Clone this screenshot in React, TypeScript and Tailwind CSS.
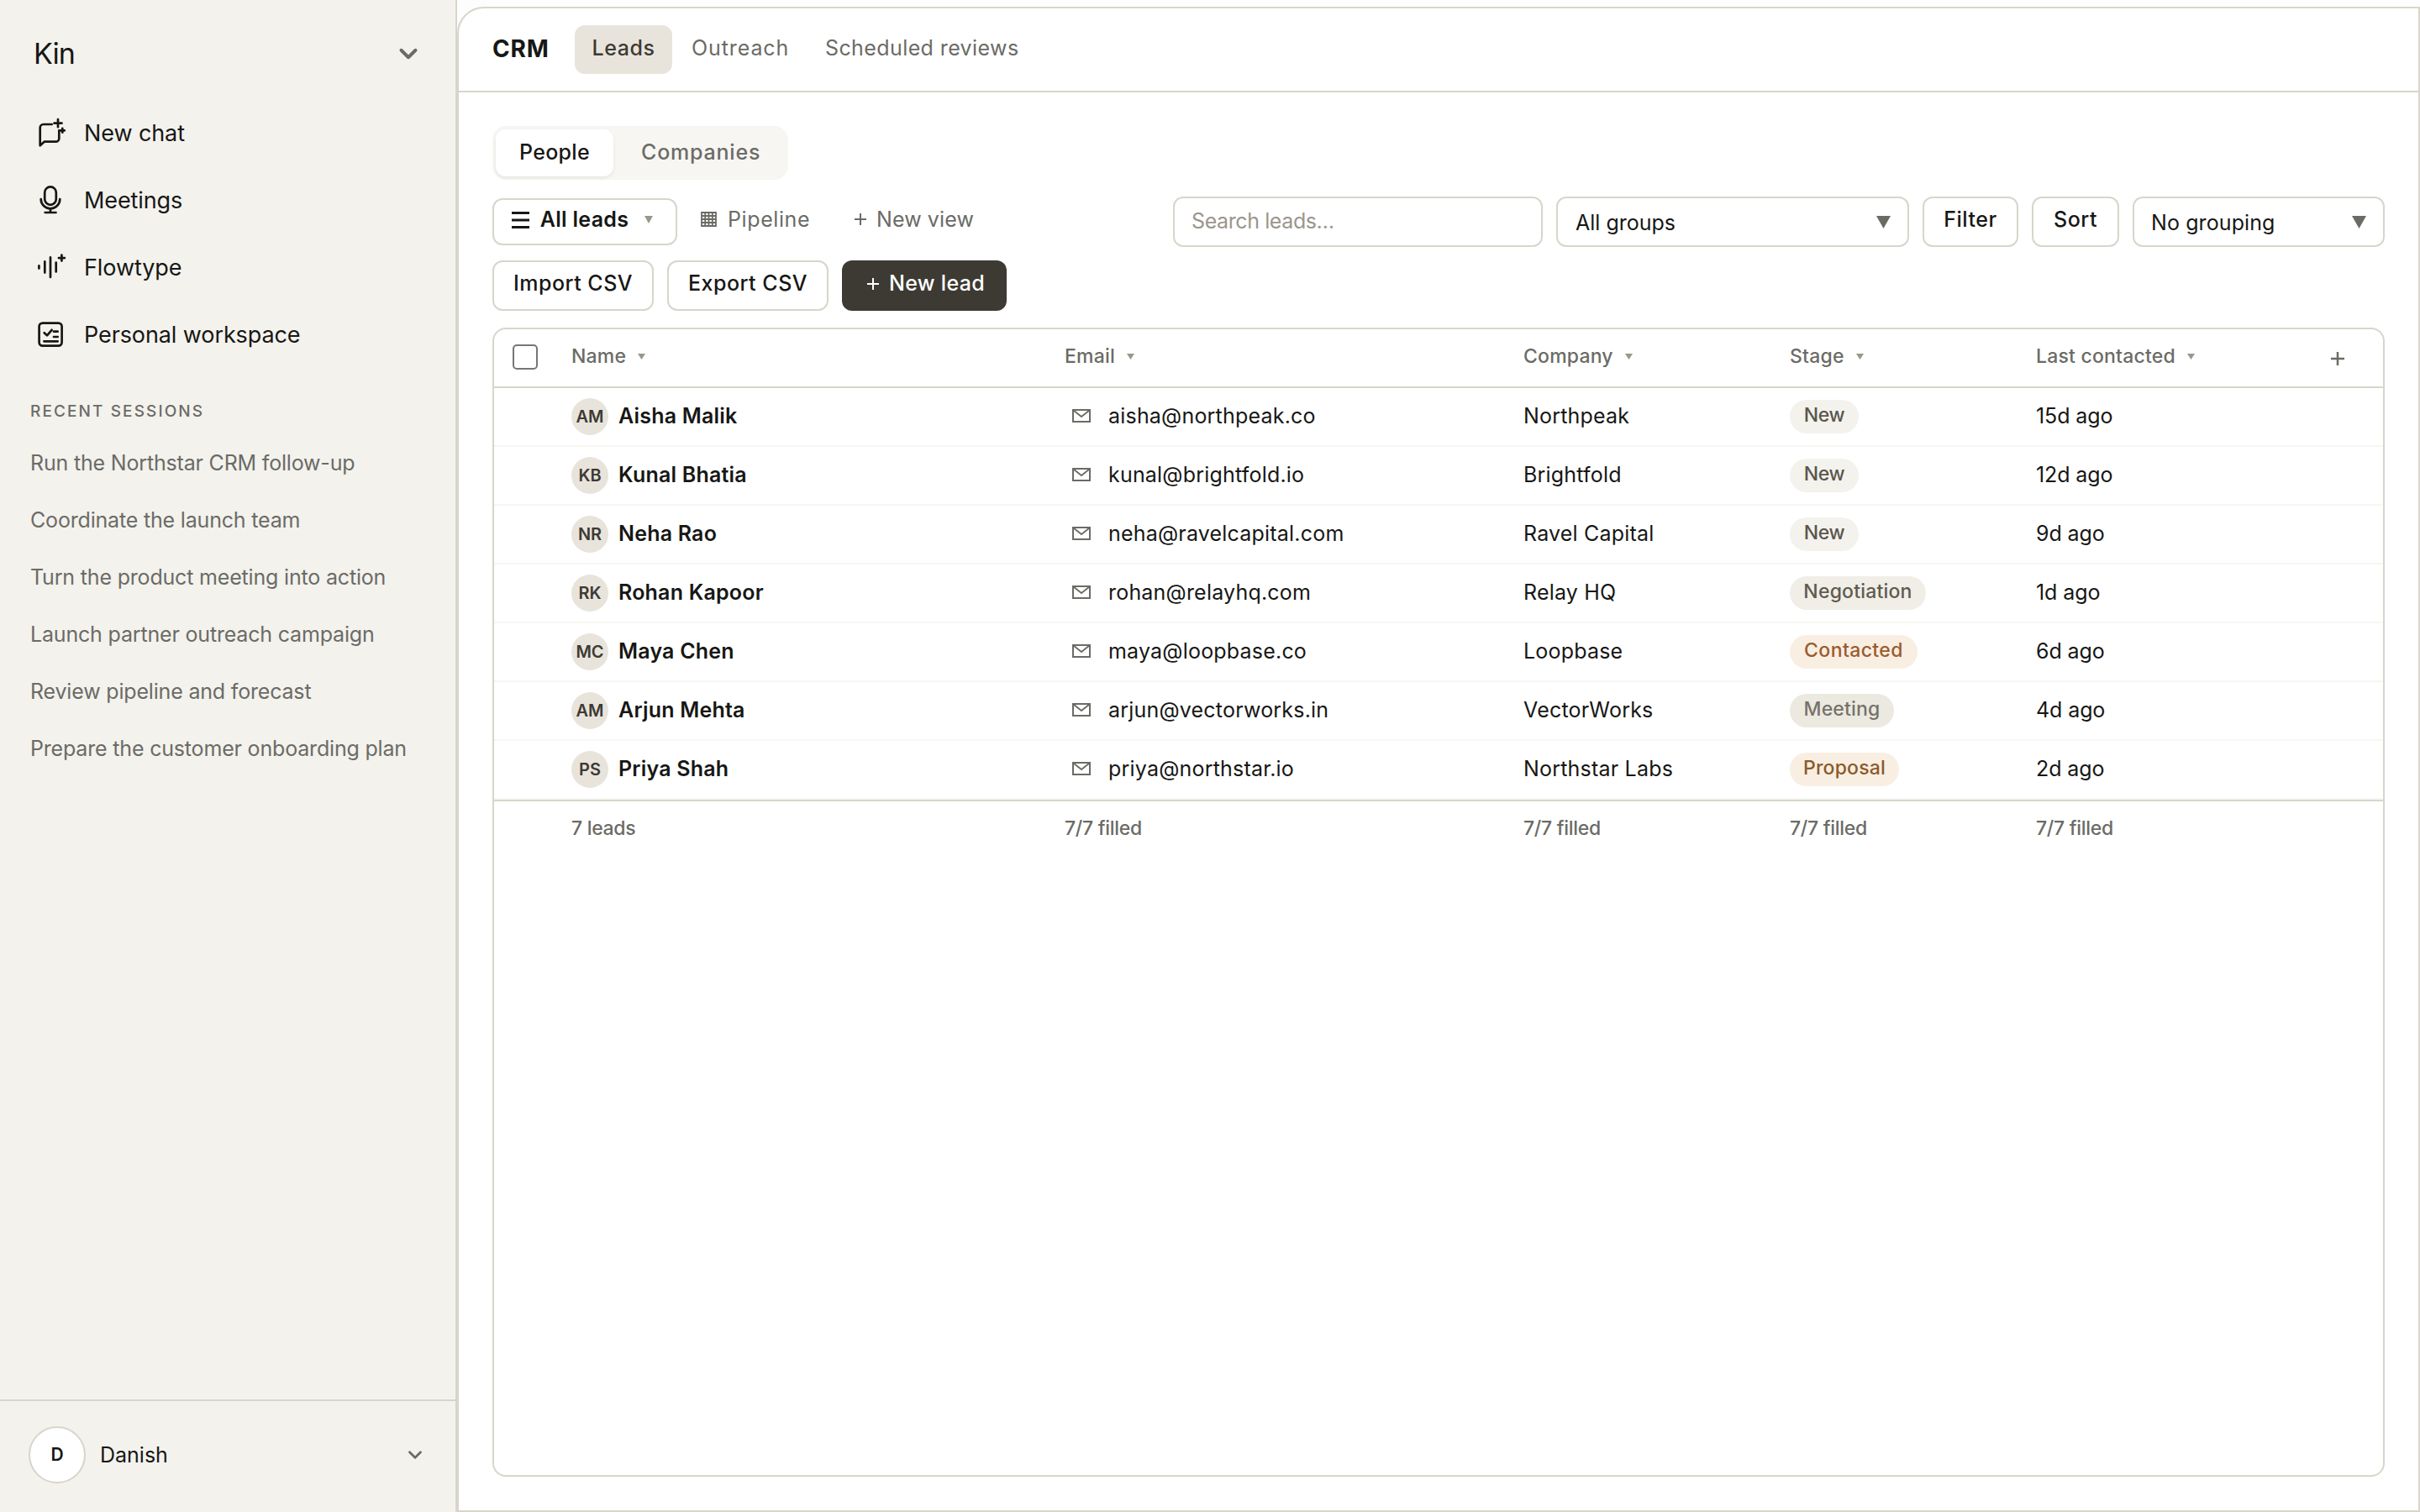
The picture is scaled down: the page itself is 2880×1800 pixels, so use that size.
import React from 'react';
import clsx from 'clsx';

interface Lead {
  initials: string;
  name: string;
  email: string;
  company: string;
  stage: string;
  last: string;
}

const leads: Lead[] = [
  { initials: 'AM', name: 'Aisha Malik', email: 'aisha@northpeak.co', company: 'Northpeak', stage: 'New', last: '15d ago' },
  { initials: 'KB', name: 'Kunal Bhatia', email: 'kunal@brightfold.io', company: 'Brightfold', stage: 'New', last: '12d ago' },
  { initials: 'NR', name: 'Neha Rao', email: 'neha@ravelcapital.com', company: 'Ravel Capital', stage: 'New', last: '9d ago' },
  { initials: 'RK', name: 'Rohan Kapoor', email: 'rohan@relayhq.com', company: 'Relay HQ', stage: 'Negotiation', last: '1d ago' },
  { initials: 'MC', name: 'Maya Chen', email: 'maya@loopbase.co', company: 'Loopbase', stage: 'Contacted', last: '6d ago' },
  { initials: 'AM', name: 'Arjun Mehta', email: 'arjun@vectorworks.in', company: 'VectorWorks', stage: 'Meeting', last: '4d ago' },
  { initials: 'PS', name: 'Priya Shah', email: 'priya@northstar.io', company: 'Northstar Labs', stage: 'Proposal', last: '2d ago' },
];

const sessions = [
  'Run the Northstar CRM follow-up',
  'Coordinate the launch team',
  'Turn the product meeting into action',
  'Launch partner outreach campaign',
  'Review pipeline and forecast',
  'Prepare the customer onboarding plan',
];

const stageStyles: Record<string, string> = {
  New: 'w-[82px] bg-[#f3f2ed] text-[#5a564d] tracking-[-0.4px]',
  Negotiation: 'w-[162px] bg-[#f0eee7] text-[#5f5b50]',
  Contacted: 'w-[152px] bg-[#f9eee2] text-[#9a5b2e] tracking-[0.4px]',
  Meeting: 'w-[124px] bg-[#ece9e1] text-[#76726a]',
  Proposal: 'w-[130px] bg-[#f9eee2] text-[#8a5a2b]',
};

const GRID = 'grid grid-cols-[92px_587px_546px_317px_293px_300px_1fr] items-center';

const NavIcon = ({ children }: { children: React.ReactNode }) => (
  <svg
    className="size-10 shrink-0"
    viewBox="0 0 40 40"
    fill="none"
    stroke="currentColor"
    strokeWidth="2.7"
    strokeLinecap="round"
    strokeLinejoin="round"
  >
    {children}
  </svg>
);

const NewChatIcon = () => (
  <NavIcon>
    <path d="M21.7 10H11.7a4 4 0 0 0-4 4V35.3l5-4.6h13.6a4 4 0 0 0 4-4V17.3" />
    <path d="M29 4.2v9M24.5 8.7h9M34.3 14.9v4.8M31 17.3h5.8" />
  </NavIcon>
);

const MicIcon = () => (
  <NavIcon>
    <rect x="13.2" y="4.4" width="13.6" height="21.4" rx="6.8" />
    <path d="M8.7 19a11.3 11.3 0 0 0 22.6 0M20 30.5V35M13.7 35h12.8" />
  </NavIcon>
);

const FlowIcon = () => (
  <NavIcon>
    <path d="M6.4 18.4v3.2M13.3 13.4v13.2M20 8.4v23.6M26.7 14.6v10.8M33.4 5.6v7M29.9 9.1h7" />
  </NavIcon>
);

const WorkspaceIcon = () => (
  <NavIcon>
    <rect x="6.6" y="6.6" width="27" height="27" rx="4" />
    <path d="M12.7 18.2l3.3 3.2 5.6-6.6M24 16.7h4.7M24 23h4.7M12.4 28.3h16.3" />
  </NavIcon>
);

const Caret = ({ className }: { className?: string }) => (
  <svg className={clsx('shrink-0', className)} viewBox="0 0 10 8" preserveAspectRatio="none" fill="currentColor">
    <path d="M0 0h10L5 8z" />
  </svg>
);

const Chevron = ({ className, strokeWidth }: { className?: string; strokeWidth: number }) => (
  <svg
    className={clsx('shrink-0 text-[#6b6b66]', className)}
    viewBox="0 0 24 24"
    fill="none"
    stroke="currentColor"
    strokeWidth={strokeWidth}
    strokeLinecap="round"
    strokeLinejoin="round"
  >
    <path d="M6 9l6 6 6-6" />
  </svg>
);

const Plus = ({ className, strokeWidth = 2 }: { className?: string; strokeWidth?: number }) => (
  <svg className={clsx('shrink-0', className)} viewBox="0 0 14 14" fill="none" stroke="currentColor" strokeWidth={strokeWidth}>
    <path d="M7 0v14M0 7h14" />
  </svg>
);

const MailIcon = () => (
  <svg className="h-4 w-[22px] shrink-0 text-[#6b6b66]" viewBox="0 0 22 16" fill="none" stroke="currentColor" strokeWidth="2">
    <path d="M1 1h20v14H1z" />
    <path d="M1.5 1.5L11 9l9.5-7.5" strokeWidth="1.8" />
  </svg>
);

const nav = [
  { label: 'New chat', icon: <NewChatIcon /> },
  { label: 'Meetings', icon: <MicIcon /> },
  { label: 'Flowtype', icon: <FlowIcon /> },
  { label: 'Personal workspace', icon: <WorkspaceIcon /> },
];

const Sidebar = () => (
  <aside className="flex w-[544px] shrink-0 flex-col border-r-2 border-[#d8d5cb] bg-[#f3f2ed]">
    <div className="flex h-[118px] items-center justify-between pt-[18px] pr-[39px] pb-[8px] pl-[40px]">
      <span className="text-[34px] tracking-[-0.9px]">Kin</span>
      <Chevron className="size-[34px]" strokeWidth={2.8} />
    </div>
    <nav>
      {nav.map((item) => (
        <div key={item.label} className="flex h-20 items-center gap-5 pl-10 text-[27px] font-[420] tracking-[-0.1px]">
          {item.icon}
          <span className="pt-px">{item.label}</span>
        </div>
      ))}
    </nav>
    <div className="pt-[32px] pl-9 text-[#6b6b66]">
      <h2 className="flex h-10 items-center text-[19px] font-[550] tracking-[2.1px]">RECENT SESSIONS</h2>
      <div className="mt-[7px]">
        {sessions.map((s) => (
          <div key={s} className="flex h-[68px] items-center text-[25px] font-[370] tracking-[-0.18px]">{s}</div>
        ))}
      </div>
    </div>
    <div className="mt-auto flex h-[134px] items-center border-t-2 border-[#d8d5cb] pr-[35px] pb-1 pl-[34px]">
      <div className="flex size-[68px] items-center justify-center rounded-full border-2 border-[#d8d5cb] bg-white text-[21px] font-semibold">
        D
      </div>
      <span className="ml-[17px] text-[25px] font-[420]">Danish</span>
      <Chevron className="ml-auto size-[26px]" strokeWidth={2.6} />
    </div>
  </aside>
);

const TopBar = () => (
  <header className="flex h-[100px] shrink-0 items-center border-b-2 border-[#d8d5cb] pl-10">
    <h1 className="w-[98px] pb-[2px] text-[28px] font-[650] tracking-[0.8px]">CRM</h1>
    <div className="flex h-[58px] w-[116px] items-center justify-center rounded-xl bg-[#e8e4dc] pb-[3px] text-[25px] font-medium tracking-[0.6px] text-[#3d3a33]">
      Leads
    </div>
    <span className="ml-[23px] w-[159px] pb-[3px] text-[25px] font-[420] tracking-[0.9px] text-[#6b6b66]">Outreach</span>
    <span className="pb-[3px] text-[25px] font-[420] tracking-[0.4px] text-[#6b6b66]">Scheduled reviews</span>
  </header>
);

const BTN = 'flex shrink-0 justify-center rounded-xl border-2 border-[#d8d5cb] bg-white font-[450] tracking-[0.5px]';

const Toolbar = () => (
  <>
    <div className="flex h-16 w-[352px] items-center rounded-2xl bg-[#f7f6f2] pl-1 text-[25px] font-[530]">
      <div className="flex h-14 w-[140px] items-center justify-center rounded-xl bg-white pb-0.5 tracking-[0.3px] shadow-[0_2px_4px_rgba(0,0,0,0.07)]">
        People
      </div>
      <div className="ml-[33px] pb-0.5 tracking-[0.8px] text-[#6b6b66]">Companies</div>
    </div>

    <div className="mt-5 flex h-[60px] items-center text-[25px]">
      <div className={clsx(BTN, 'h-14 w-[220px] items-center pr-[6px] pb-[5px]')}>
        <svg className="h-5 w-[21px]" viewBox="0 0 21 20" stroke="currentColor" strokeWidth="3">
          <path d="M0 1.5h21M0 10h21M0 18.5h21" />
        </svg>
        <span className="ml-[13px] font-[580] tracking-[0.3px]">All leads</span>
        <Caret className="ml-[19px] h-[9px] w-2.5 text-[#9a968c]" />
      </div>
      <div className="ml-[28px] flex w-[183px] items-center pb-[6px] font-[420] tracking-[0.6px] text-[#6b6b66]">
        <svg className="mr-[13px] h-[18px] w-[19px]" viewBox="0 0 19 18" fill="none" stroke="currentColor" strokeWidth="1.8">
          <path d="M1 1h17v16H1zM5.2 1v16M9.5 1v16M13.8 1v16M1 5h17M1 9h17M1 13h17" />
        </svg>
        Pipeline
      </div>
      <div className="flex items-center pb-[6px] font-[420] tracking-[0.1px] text-[#6b6b66]">
        <Plus className="mr-[12px] size-3.5" />
        New view
      </div>
      <div className="ml-auto flex gap-4">
        <div className="flex h-[60px] w-[440px] items-center rounded-xl border-2 border-[#d8d5cb] pb-[2px] pl-[20px] tracking-[-0.4px] text-[#9a968c]">
          Search leads…
        </div>
        <div className="flex h-[60px] w-[420px] items-center justify-between rounded-xl border-2 border-[#d8d5cb] pr-[20px] pl-[21px]">
          <span className="pt-[3px]">All groups</span>
          <Caret className="h-[15px] w-[17px] text-[#6b6b66]" />
        </div>
        <div className={clsx(BTN, 'h-[60px] w-[114px] items-center pb-[6px]')}>Filter</div>
        <div className={clsx(BTN, 'h-[60px] w-[104px] items-center pb-[6px]')}>Sort</div>
        <div className="flex h-[60px] w-[300px] items-center justify-between rounded-xl border-2 border-[#d8d5cb] pr-[20px] pl-5">
          <span className="pt-[3px] tracking-[0.1px]">No grouping</span>
          <Caret className="h-[15px] w-[17px] text-[#6b6b66]" />
        </div>
      </div>
    </div>

    <div className="mt-4 mb-5 flex gap-4 text-[25px]">
      <div className={clsx(BTN, 'h-[60px] w-48 items-center pb-[5px]')}>Import CSV</div>
      <div className={clsx(BTN, 'h-[60px] w-48 items-center pb-[5px]')}>Export CSV</div>
      <div className="flex h-[60px] w-[196px] items-center justify-center rounded-xl bg-[#3d3a33] pb-[5px] pl-1 font-[450] tracking-[0.3px] text-white">
        <Plus className="mr-[12px] size-3.5" />
        New lead
      </div>
    </div>
  </>
);

const HeaderCell = ({ label }: { label: string }) => (
  <div className="flex items-center pb-[3px]">
    {label}
    <Caret className="ml-[14px] h-[7px] w-[9px] text-[#9a968c]" />
  </div>
);

const LeadsTable = () => (
  <div className="flex-1 overflow-hidden rounded-2xl border-2 border-[#d8d5cb] bg-white">
    <div className={clsx(GRID, 'h-[70px] border-b-2 border-[#d8d5cb] text-[23px] font-[550] tracking-[0.2px] text-[#6b6b66]')}>
      <div className="mb-0.5 ml-[22px] size-[30px] rounded-[5px] border-2 border-[#767676]" />
      <HeaderCell label="Name" />
      <HeaderCell label="Email" />
      <HeaderCell label="Company" />
      <HeaderCell label="Stage" />
      <HeaderCell label="Last contacted" />
      <Plus className="mt-0.5 mr-[46px] size-4 justify-self-end" strokeWidth={2.2} />
    </div>

    {leads.map((lead) => (
      <div key={lead.email} className={clsx(GRID, 'h-[70px] border-b-2 border-[#f7f6f2] text-[25px] tracking-[0.2px]')}>
        <div />
        <div className="flex items-center">
          <div className="flex size-11 items-center justify-center rounded-full bg-[#e8e4dc] text-[20px] font-semibold tracking-normal text-[#3d3a33]">
            {lead.initials}
          </div>
          <span className="ml-3 pb-[2px] font-[570]">{lead.name}</span>
        </div>
        <div className="flex items-center pb-[2px] pl-[9px]">
          <MailIcon />
          <span className="ml-[21px]">{lead.email}</span>
        </div>
        <div className="pb-[2px]">{lead.company}</div>
        <div
          className={clsx(
            'flex h-10 items-center justify-center rounded-full pb-[3px] text-[23px] font-[550]',
            stageStyles[lead.stage],
          )}
        >
          {lead.stage}
        </div>
        <div className="pb-[2px] tracking-[-0.1px]">{lead.last}</div>
      </div>
    ))}

    <div className={clsx(GRID, 'h-[68px] border-t-2 border-[#d8d5cb] text-[23px] font-medium tracking-[-0.3px] text-[#6b6b66]')}>
      <div />
      <div>7 leads</div>
      <div>7/7 filled</div>
      <div>7/7 filled</div>
      <div>7/7 filled</div>
      <div>7/7 filled</div>
    </div>
  </div>
);

export default function App() {
  return (
    <div className="flex h-[1800px] w-[2880px] overflow-hidden bg-[#fdfdfd] font-['Inter',sans-serif] leading-[1.3] text-[#171715]">
      <Sidebar />
      <main className="mt-2 flex flex-1 flex-col rounded-tl-[32px] border-2 border-[#d8d5cb] bg-white">
        <TopBar />
        <div className="flex flex-1 flex-col px-10 pt-10 pb-10">
          <Toolbar />
          <LeadsTable />
        </div>
      </main>
    </div>
  );
}
